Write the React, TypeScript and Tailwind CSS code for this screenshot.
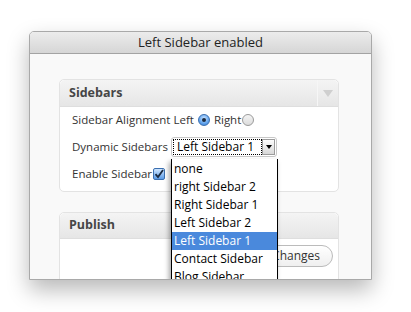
const sidebarOptions = [
  'none',
  'right Sidebar 2',
  'Right Sidebar 1',
  'Left Sidebar 2',
  'Left Sidebar 1',
  'Contact Sidebar',
  'Blog Sidebar',
];

function Radio({ checked }: { checked?: boolean }) {
  if (checked) {
    return (
      <span className="flex w-[12px] h-[12px] rounded-full items-center justify-center border border-[#3b6fb0] bg-[radial-gradient(circle_at_50%_35%,#cfe6ff_0%,#6aaaf0_55%,#2f78d0_100%)]">
        <span className="w-[4px] h-[4px] rounded-full bg-[#1a2a40]" />
      </span>
    );
  }
  return (
    <span className="block w-[12px] h-[12px] rounded-full border border-[#9a9a9a] bg-[linear-gradient(#f4f4f4,#dcdcdc)]" />
  );
}

export default function App() {
  return (
    <div className="w-[411px] h-[312px] bg-white pt-[31px] pl-[29px] font-['Open_Sans',sans-serif] text-[#333]">
      {/* window */}
      <div className="w-[343px] h-[249px] rounded-t-[5px] border border-[#a9a9a9] overflow-hidden bg-[#f9f9f9] shadow-[0_10px_22px_rgba(0,0,0,0.28)] flex flex-col">
        <div className="h-[22px] shrink-0 border-b border-[#a3a3a3] bg-[linear-gradient(#ececec,#d6d6d6)] flex items-center justify-center text-[13px] text-[#222] leading-none">
          Left Sidebar enabled
        </div>

        <div className="pl-[29px] pt-[25px]">
          {/* Sidebars box */}
          <div className="w-[280px] rounded-[5px] border border-[#e3e3e3] bg-white">
            <div className="h-[27px] flex rounded-t-[5px] border-b border-[#dedede] bg-[linear-gradient(#f4f4f4,#e6e6e6)]">
              <div className="flex-1 flex items-center pl-[9px] text-[12.5px] font-bold text-[#464646]">Sidebars</div>
              <div className="w-[21px] border-l border-[#f6f6f6] flex items-center justify-center">
                <span className="w-0 h-0 border-l-[5px] border-r-[5px] border-t-[7px] border-l-transparent border-r-transparent border-t-[#cfcfcf]" />
              </div>
            </div>

            <div className="pl-[12px] text-[11.5px] pb-[4px] whitespace-nowrap">
              <div className="h-[26px] flex items-center">
                <span>Sidebar Alignment Left</span>
                <span className="ml-[4px]"><Radio checked /></span>
                <span className="ml-[4px]">Right</span>
                <span className="ml-[1px]"><Radio /></span>
              </div>

              <div className="h-[28px] flex items-center">
                <span className="w-[99px] shrink-0">Dynamic Sidebars</span>
                <div className="relative">
                  <div className="w-[106px] h-[20px] rounded-[3px] border border-[#c8c8c8] bg-white flex p-[1px]">
                    <div className="flex-1 border border-dotted border-black flex items-center pl-[3px] leading-none text-[12px] text-black">
                      Left Sidebar 1
                    </div>
                    <div className="w-[13px] border border-[#9c9c9c] bg-[linear-gradient(#fdfdfd,#d8d8d8)] flex items-center justify-center">
                      <span className="w-0 h-0 border-l-[3px] border-r-[3px] border-t-[4px] border-l-transparent border-r-transparent border-t-black" />
                    </div>
                  </div>

                  {/* open option list */}
                  <div className="absolute left-0 top-[calc(100%+2px)] z-10 w-[107px] bg-white border-x border-black shadow-[-2px_3px_5px_rgba(0,0,0,0.35)] pt-[1px] text-[12px]">
                    {sidebarOptions.map((opt) => (
                      <div
                        key={opt}
                        className={
                          opt === 'Left Sidebar 1'
                            ? 'h-[18px] flex items-center pl-[2px] bg-[#4a89dc] text-white'
                            : 'h-[18px] flex items-center pl-[2px] text-black'
                        }
                      >
                        {opt}
                      </div>
                    ))}
                  </div>
                </div>
              </div>

              <div className="h-[26px] flex items-center">
                <span>Enable Sidebar</span>
                <span className="ml-[1px] w-[12px] h-[12px] rounded-[2px] border border-[#3b6fb0] bg-[linear-gradient(#cfe6ff,#5b9be6)] flex items-center justify-center">
                  <svg width="10" height="10" viewBox="0 0 10 10">
                    <path d="M1.5 5.2 L4 8 L9 1" fill="none" stroke="#1a2a40" strokeWidth="1.8" />
                  </svg>
                </span>
              </div>
            </div>
          </div>

          {/* Publish box */}
          <div className="mt-[20px] w-[280px] h-[80px] rounded-t-[5px] border border-[#e3e3e3] bg-white">
            <div className="h-[26px] flex items-center pl-[9px] rounded-t-[5px] border-b border-[#dedede] bg-[linear-gradient(#f4f4f4,#e6e6e6)] text-[12.5px] font-bold text-[#464646]">
              Publish
            </div>
            <div className="flex justify-end pr-[5px] pt-[6px]">
              <button className="h-[22px] px-[12px] rounded-full border border-[#bbb] bg-[linear-gradient(#ffffff,#efefef)] text-[12px] text-[#333] leading-none">
                Save Changes
              </button>
            </div>
          </div>
        </div>
      </div>
    </div>
  );
}
